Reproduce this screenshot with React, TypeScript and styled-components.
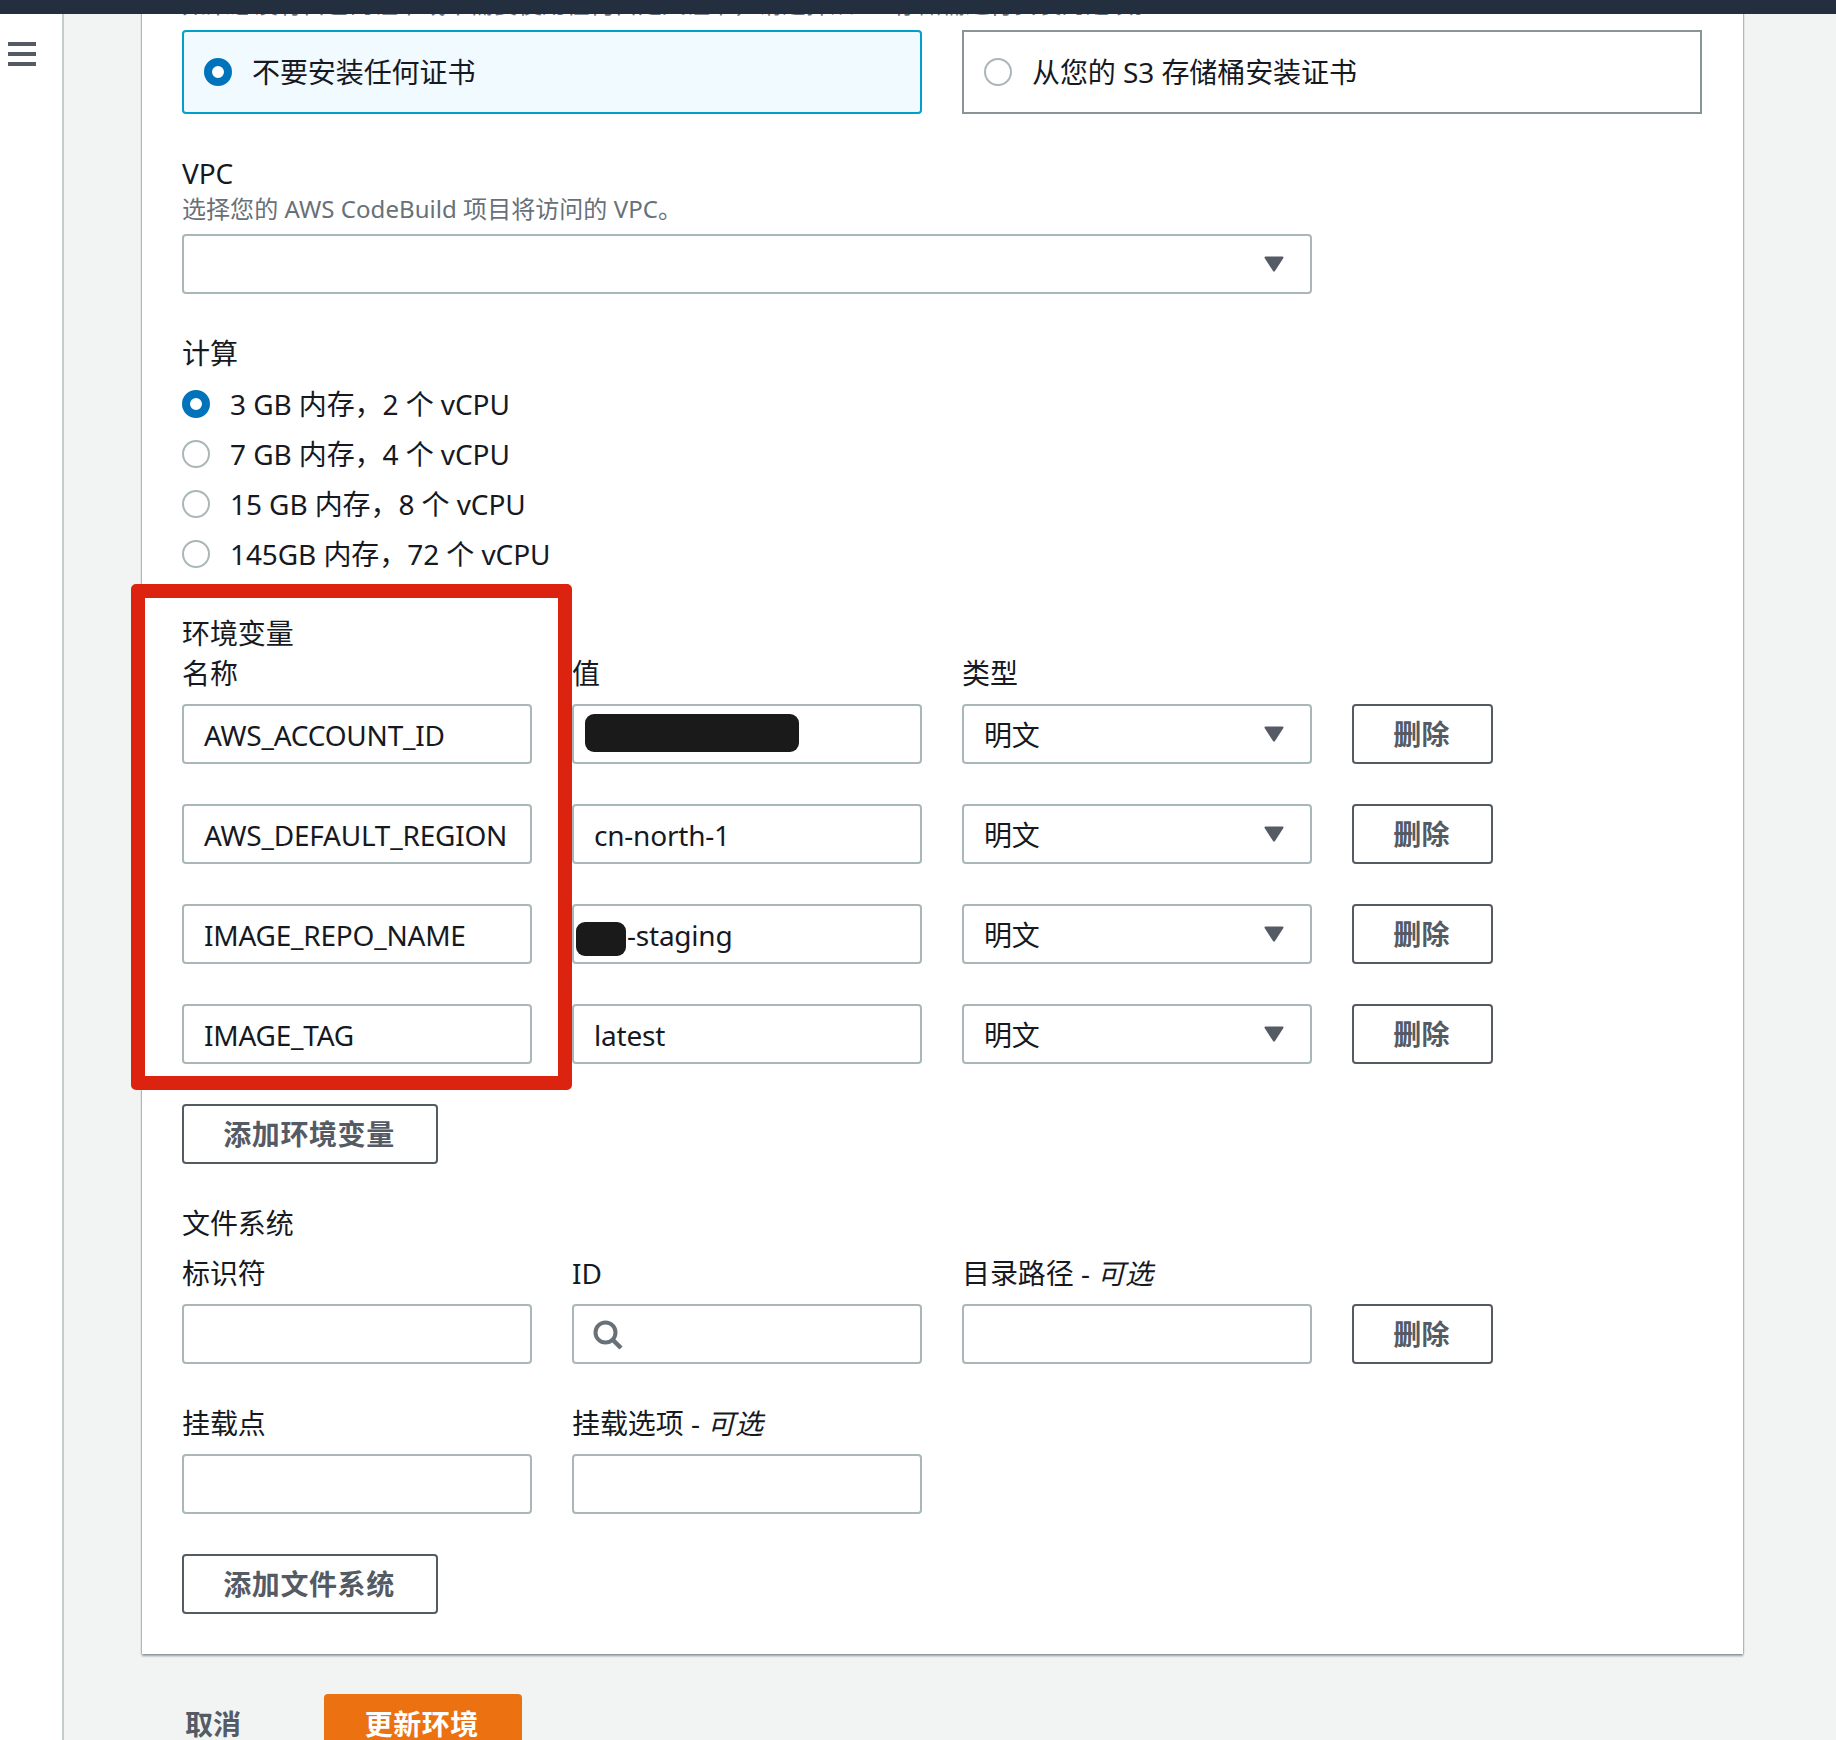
import React from 'react'
import styled, { createGlobalStyle } from 'styled-components'

const envRows = [
  { name: 'AWS_ACCOUNT_ID', value: '', mask: 'long' },
  { name: 'AWS_DEFAULT_REGION', value: 'cn-north-1' },
  { name: 'IMAGE_REPO_NAME', value: '-staging', mask: 'short' },
  { name: 'IMAGE_TAG', value: 'latest' },
]

const computeOptions = [
  '3 GB 内存，2 个 vCPU',
  '7 GB 内存，4 个 vCPU',
  '15 GB 内存，8 个 vCPU',
  '145GB 内存，72 个 vCPU',
]

const Arrow: React.FC = () => (
  <ArrowIcon width="20" height="16" viewBox="0 0 20 16">
    <path d="M1.5 0.5h17a1 1 0 0 1 .9 1.5L11 15a1.2 1.2 0 0 1-2 0L.6 2a1 1 0 0 1 .9-1.5z" fill="#545b64" />
  </ArrowIcon>
)

const App: React.FC = () => (
  <Page>
    <GlobalStyle />
    <TopBar />
    <Body>
      <Sidebar>
        <Burger>
          <span />
          <span />
          <span />
        </Burger>
      </Sidebar>
      <Main>
        <Card>
          <ClippedHint>如果您没有自己的证书或不需要使用任何自定义证书，请选择从 S3 存储桶进行安装的选项。</ClippedHint>
          <Tiles>
            <Tile $selected>
              <Radio $checked />
              <span>不要安装任何证书</span>
            </Tile>
            <Tile>
              <Radio />
              <span>从您的 S3 存储桶安装证书</span>
            </Tile>
          </Tiles>

          <Section>
            <Label>VPC</Label>
            <Description>选择您的 AWS CodeBuild 项目将访问的 VPC。</Description>
            <WideField>
              <Arrow />
            </WideField>
          </Section>

          <Section>
            <Label>计算</Label>
            <RadioList>
              {computeOptions.map((option, i) => (
                <RadioRow key={option}>
                  <Radio $checked={i === 0} />
                  <span>{option}</span>
                </RadioRow>
              ))}
            </RadioList>
          </Section>

          <EnvSection>
            <Highlight />
            <Label>环境变量</Label>
            <HeaderGrid>
              <Label>名称</Label>
              <Label>值</Label>
              <Label>类型</Label>
            </HeaderGrid>
            <RowsGrid>
              {envRows.map((row) => (
                <React.Fragment key={row.name}>
                  <Field>{row.name}</Field>
                  <Field $tight={row.mask === 'short'}>
                    {row.mask === 'long' && <LongMask />}
                    {row.mask === 'short' && <ShortMask />}
                    {row.value}
                  </Field>
                  <Field>
                    明文
                    <Arrow />
                  </Field>
                  <OutlineButton>删除</OutlineButton>
                </React.Fragment>
              ))}
            </RowsGrid>
            <AddButton>添加环境变量</AddButton>
          </EnvSection>

          <Section>
            <Label>文件系统</Label>
            <SecondHeader $top={10}>
              <Label>标识符</Label>
              <Label>ID</Label>
              <Label>
                目录路径 - <em>可选</em>
              </Label>
            </SecondHeader>
            <RowsGrid>
              <Field />
              <Field>
                <SearchIcon width="30" height="30" viewBox="0 0 30 30">
                  <circle cx="12.5" cy="12.5" r="10" fill="none" stroke="#687078" strokeWidth="4" />
                  <path d="M19.5 19.5L28 28" stroke="#687078" strokeWidth="4.5" />
                </SearchIcon>
              </Field>
              <Field />
              <OutlineButton>删除</OutlineButton>
            </RowsGrid>
            <SecondHeader $top={40}>
              <Label>挂载点</Label>
              <Label>
                挂载选项 - <em>可选</em>
              </Label>
            </SecondHeader>
            <RowsGrid>
              <Field />
              <Field />
            </RowsGrid>
            <AddButton>添加文件系统</AddButton>
          </Section>
        </Card>
        <Actions>
          <CancelLink>取消</CancelLink>
          <PrimaryButton>更新环境</PrimaryButton>
        </Actions>
      </Main>
    </Body>
  </Page>
)

const GlobalStyle = createGlobalStyle`
  html, body {
    margin: 0;
    padding: 0;
    background: #f2f3f3;
  }
  body {
    font-family: "Noto Sans", "Noto Sans CJK SC", sans-serif;
    font-size: 28px;
    line-height: 40px;
    letter-spacing: -0.08px;
    color: #16191f;
  }
`

const Page = styled.div`
  width: 1836px;
  height: 1740px;
  overflow: hidden;
  display: flex;
  flex-direction: column;
  background: #f2f3f3;
`

const TopBar = styled.div`
  position: relative;
  z-index: 1;
  flex: 0 0 14px;
  background: #232f3e;
`

const Body = styled.div`
  flex: 1;
  display: flex;
  min-height: 0;
`

const Sidebar = styled.div`
  flex: 0 0 64px;
  box-sizing: border-box;
  background: #fff;
  border-right: 2px solid #c5cccd;
  padding: 28px 0 0 8px;
`

const Burger = styled.div`
  display: flex;
  flex-direction: column;
  gap: 6px;
  width: 28px;

  span {
    height: 4px;
    background: #545b64;
  }
`

const Main = styled.div`
  flex: 1;
  min-width: 0;
  padding: 0 93px 0 78px;
  overflow: hidden;
`

const Card = styled.div`
  box-sizing: border-box;
  background: #fff;
  margin-top: -28px;
  padding: 0 41px 40px 40px;
  box-shadow: 0 2px 2px 0 rgba(0, 28, 36, 0.4), 1px 0 1px 0 rgba(0, 28, 36, 0.16), -1px 0 1px 0 rgba(0, 28, 36, 0.16);
`

const ClippedHint = styled.div`
  font-size: 24px;
  line-height: 36px;
  height: 44px;
  letter-spacing: 0;
  color: #687078;
  white-space: nowrap;
  overflow: hidden;
`

const Tiles = styled.div`
  display: grid;
  grid-template-columns: 740px 740px;
  gap: 40px;
`

const Tile = styled.div<{ $selected?: boolean }>`
  box-sizing: border-box;
  height: 84px;
  display: flex;
  align-items: center;
  gap: 20px;
  padding-left: 20px;
  border: 2px solid ${(props) => (props.$selected ? '#00a1c9' : '#879596')};
  border-radius: ${(props) => (props.$selected ? '4px' : '0')};
  background: ${(props) => (props.$selected ? '#f1faff' : '#fff')};
`

const Radio = styled.span<{ $checked?: boolean }>`
  box-sizing: border-box;
  flex: 0 0 28px;
  width: 28px;
  height: 28px;
  border-radius: 50%;
  background: #fff;
  border: ${(props) => (props.$checked ? '8px solid #0073bb' : '2px solid #aab7b8')};
`

const Section = styled.section`
  margin-top: 40px;
`

const EnvSection = styled(Section)`
  position: relative;
  margin-top: 35px;
`

const Highlight = styled.div`
  position: absolute;
  left: -51px;
  top: -30px;
  width: 441px;
  height: 506px;
  box-sizing: border-box;
  border: 14px solid #dc2310;
  border-radius: 5px;
  pointer-events: none;
`

const Label = styled.div`
  font-size: 28px;
  line-height: 40px;
  color: #16191f;
  position: relative;
  top: -1px;

  em {
    font-style: italic;
  }
`

const Description = styled.div`
  font-size: 24px;
  line-height: 36px;
  letter-spacing: 0.05px;
  margin: -3px 0 7px;
  color: #687078;
`

const fieldBox = `
  box-sizing: border-box;
  height: 60px;
  position: relative;
  background: #fff;
  border: 2px solid #aab7b8;
  border-radius: 4px;
  font-size: 28px;
  line-height: 58px;
  letter-spacing: -0.22px;
  padding-left: 20px;
  color: #16191f;
  white-space: nowrap;
`

const WideField = styled.div`
  ${fieldBox}
  width: 1130px;
`

const Field = styled.div<{ $tight?: boolean }>`
  ${fieldBox}
  padding-left: ${(props) => (props.$tight ? '53px' : '20px')};
`

const ArrowIcon = styled.svg`
  position: absolute;
  right: 26px;
  top: 20px;
`

const SearchIcon = styled.svg`
  position: absolute;
  left: 19px;
  top: 14px;
`

const LongMask = styled.span`
  position: absolute;
  left: 11px;
  top: 8px;
  width: 214px;
  height: 38px;
  border-radius: 9px;
  background: #1a1a1a;
`

const ShortMask = styled.span`
  position: absolute;
  left: 2px;
  top: 16px;
  width: 50px;
  height: 34px;
  border-radius: 9px;
  background: #1a1a1a;
`

const RadioList = styled.div`
  margin-top: 5px;
`

const RadioRow = styled.div`
  height: 50px;
  display: flex;
  align-items: center;
  gap: 20px;
`

const HeaderGrid = styled.div`
  display: grid;
  grid-template-columns: 350px 350px 350px;
  column-gap: 40px;
  margin: 0 0 10px;
`

const SecondHeader = styled(HeaderGrid)<{ $top: number }>`
  margin-top: ${(props) => props.$top}px;
`

const RowsGrid = styled.div`
  display: grid;
  grid-template-columns: 350px 350px 350px 141px;
  gap: 40px;
`

const OutlineButton = styled.div`
  box-sizing: border-box;
  height: 60px;
  display: flex;
  align-items: center;
  justify-content: center;
  border: 2px solid #545b64;
  border-radius: 4px;
  background: #fff;
  color: #545b64;
  font-size: 28px;
  font-weight: 700;
  letter-spacing: 0.2px;
  padding-right: 2px;
`

const AddButton = styled(OutlineButton)`
  width: 256px;
  margin-top: 40px;
  letter-spacing: 0.6px;
`

const Actions = styled.div`
  display: flex;
  align-items: flex-start;
  gap: 83px;
  margin-top: 40px;
  padding-left: 43px;
`

const CancelLink = styled.div`
  height: 60px;
  line-height: 60px;
  color: #545b64;
  font-weight: 700;
`

const PrimaryButton = styled.div`
  box-sizing: border-box;
  width: 198px;
  height: 60px;
  display: flex;
  align-items: center;
  justify-content: center;
  padding-right: 2px;
  background: #ec7211;
  border-radius: 4px;
  color: #fff;
  font-weight: 700;
  letter-spacing: 0.5px;
`

export default App
